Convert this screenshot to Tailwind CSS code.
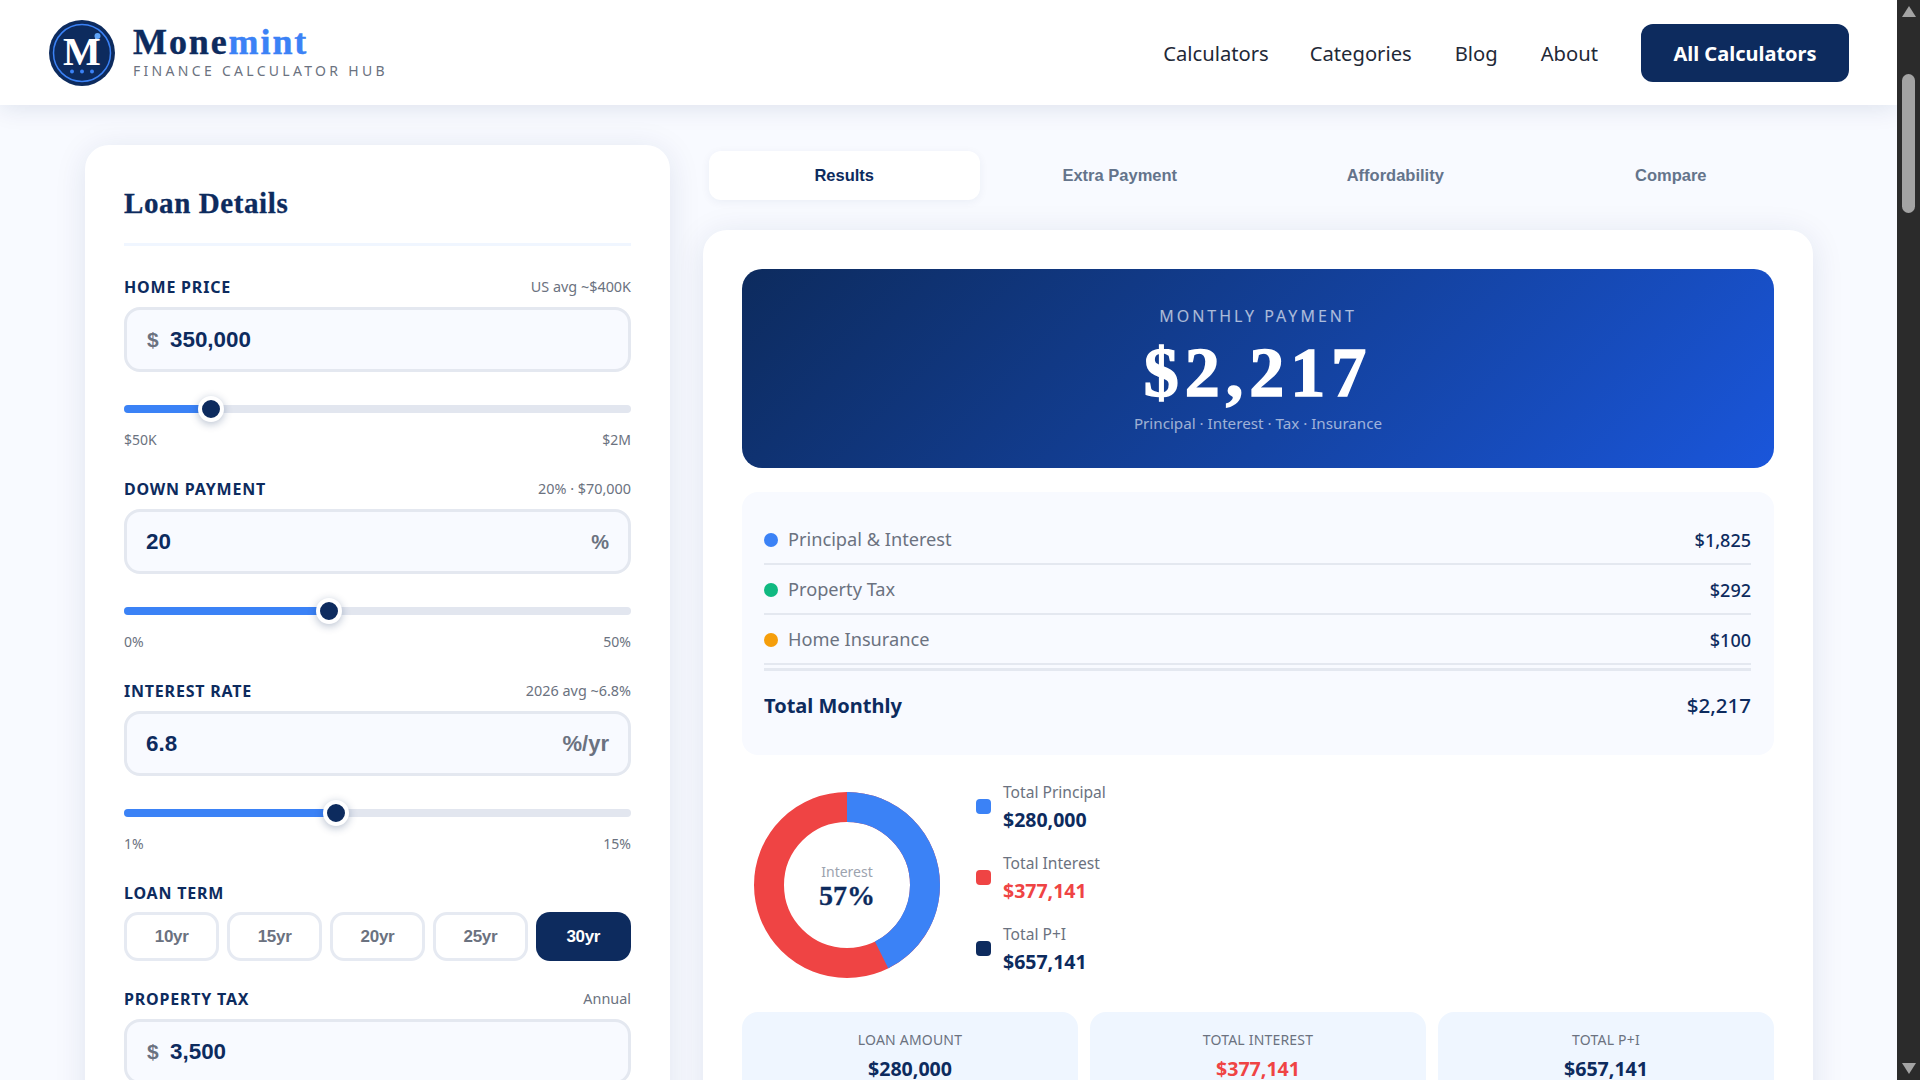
<!DOCTYPE html>
<html lang="en">
<head>
  <meta charset="UTF-8">
  <title>Monemint - Mortgage Calculator</title>
  <meta name="viewport" content="width=device-width, initial-scale=1.0">
  <script src="https://cdn.jsdelivr.net/npm/@tailwindcss/browser@4"></script>
</head>
<body class="h-screen w-screen flex overflow-hidden bg-[#f8faff] font-['Noto_Sans',sans-serif] text-[#0d2b5e]">
  <div class="flex-1 flex flex-col overflow-hidden">
    <!-- Header -->
    <header class="relative z-10 h-[105px] shrink-0 bg-white flex items-center justify-between pl-[49px] pr-[48px] shadow-[0_2px_24px_rgba(13,43,94,0.12)]">
      <div class="flex items-center gap-[18px]">
        <svg width="66" height="66" viewBox="0 0 66 66">
          <circle cx="33" cy="33" r="33" fill="#0d2b5e"/>
          <circle cx="33" cy="33" r="28.5" fill="none" stroke="#3b82f6" stroke-width="1.5"/>
          <text x="33" y="45" text-anchor="middle" font-family="Liberation Serif" font-weight="700" font-size="40" fill="#fff">M</text>
          <polyline points="36,31 40,23 43,26 48,17" fill="none" stroke="#fff" stroke-width="1.5"/>
          <circle cx="48.5" cy="16" r="3" fill="#60a5fa"/>
          <circle cx="23" cy="51.5" r="2" fill="#3b82f6"/>
          <circle cx="33" cy="51.5" r="2" fill="#3b82f6"/>
          <circle cx="43" cy="51.5" r="2" fill="#3b82f6"/>
        </svg>
        <div class="-mt-[2px]">
          <div class="font-['Liberation_Serif',serif] font-bold text-[36px] leading-[36px] tracking-[1.9px] [-webkit-text-stroke:0.4px]">Mone<span class="text-[#3b82f6]">mint</span></div>
          <div class="text-[14px] leading-[18px] mt-[2px] tracking-[3.3px] text-[#6b7280]">FINANCE CALCULATOR HUB</div>
        </div>
      </div>
      <nav class="flex items-center text-[20.2px] text-[#1f2937]">
        <a class="mr-[41px] pt-[2px]">Calculators</a>
        <a class="mr-[43px] pt-[2px]">Categories</a>
        <a class="mr-[43px] pt-[2px]">Blog</a>
        <a class="mr-[43px] pt-[2px]">About</a>
        <a class="w-[208px] h-[58px] pt-[2px] rounded-[12px] bg-[#0d2b5e] text-white text-[20px] font-bold flex items-center justify-center">All Calculators</a>
      </nav>
    </header>

    <!-- Main -->
    <main class="flex-1 flex items-start pl-[85px] pt-[40px] overflow-hidden">
      <!-- Loan details -->
      <section class="w-[585px] shrink-0 bg-white rounded-[24px] px-[39px] pt-[40px] pb-[40px] shadow-[0_4px_32px_rgba(13,43,94,0.1)]">
        <h2 class="font-['Liberation_Serif',serif] font-bold text-[29px] leading-[36px] tracking-[0.6px] [-webkit-text-stroke:0.3px]">Loan Details</h2>
        <div class="mt-[22px] mb-[31px] h-[3px] bg-[#f0f6ff]"></div>

        <div class="flex justify-between items-center h-[20px] mb-[10px]">
          <span class="text-[16px] font-bold tracking-[0.8px]">HOME PRICE</span>
          <span class="mb-[1px] text-[14.4px] text-[#6b7280]">US avg ~$400K</span>
        </div>
        <div class="h-[65px] border-[3px] border-[#e4e8f0] rounded-[16px] bg-[#f8faff] flex items-center pl-[20px] pr-[19px] font-['Liberation_Sans',sans-serif] font-bold">
          <span class="text-[21px] text-[#6b7280] w-[23px]">$</span>
          <span class="text-[22.4px]">350,000</span>
        </div>
        <div class="mt-[24px] h-[26px] flex items-center">
          <div class="relative w-full h-2 rounded-full bg-[#e2e6ef]">
            <div class="h-2 rounded-full bg-[#3b82f6] w-[87px]"></div>
            <div class="absolute left-[74px] top-[-9px] w-[26px] h-[26px] rounded-full bg-[#0d2b5e] border-[4px] border-white shadow-[0_2px_8px_rgba(13,43,94,0.3)]"></div>
          </div>
        </div>
        <div class="mt-[8px] mb-[31px] h-[18px] flex justify-between items-center text-[14px] text-[#6b7280]"><span>$50K</span><span>$2M</span></div>

        <div class="flex justify-between items-center h-[20px] mb-[10px]">
          <span class="text-[16px] font-bold tracking-[0.8px]">DOWN PAYMENT</span>
          <span class="mb-[1px] text-[14.4px] text-[#6b7280]">20% · $70,000</span>
        </div>
        <div class="h-[65px] border-[3px] border-[#e4e8f0] rounded-[16px] bg-[#f8faff] flex items-center justify-between px-[19px] font-['Liberation_Sans',sans-serif] font-bold">
          <span class="text-[22.4px]">20</span>
          <span class="text-[20px] text-[#6b7280]">%</span>
        </div>
        <div class="mt-[24px] h-[26px] flex items-center">
          <div class="relative w-full h-2 rounded-full bg-[#e2e6ef]">
            <div class="h-2 rounded-full bg-[#3b82f6] w-[205px]"></div>
            <div class="absolute left-[192px] top-[-9px] w-[26px] h-[26px] rounded-full bg-[#0d2b5e] border-[4px] border-white shadow-[0_2px_8px_rgba(13,43,94,0.3)]"></div>
          </div>
        </div>
        <div class="mt-[8px] mb-[31px] h-[18px] flex justify-between items-center text-[14px] text-[#6b7280]"><span>0%</span><span>50%</span></div>

        <div class="flex justify-between items-center h-[20px] mb-[10px]">
          <span class="text-[16px] font-bold tracking-[0.8px]">INTEREST RATE</span>
          <span class="mb-[1px] text-[14.4px] text-[#6b7280]">2026 avg ~6.8%</span>
        </div>
        <div class="h-[65px] border-[3px] border-[#e4e8f0] rounded-[16px] bg-[#f8faff] flex items-center justify-between px-[19px] font-['Liberation_Sans',sans-serif] font-bold">
          <span class="text-[22.4px]">6.8</span>
          <span class="text-[22px] text-[#6b7280]">%/yr</span>
        </div>
        <div class="mt-[24px] h-[26px] flex items-center">
          <div class="relative w-full h-2 rounded-full bg-[#e2e6ef]">
            <div class="h-2 rounded-full bg-[#3b82f6] w-[212px]"></div>
            <div class="absolute left-[199px] top-[-9px] w-[26px] h-[26px] rounded-full bg-[#0d2b5e] border-[4px] border-white shadow-[0_2px_8px_rgba(13,43,94,0.3)]"></div>
          </div>
        </div>
        <div class="mt-[8px] mb-[31px] h-[18px] flex justify-between items-center text-[14px] text-[#6b7280]"><span>1%</span><span>15%</span></div>

        <div class="flex items-center h-[20px] mb-[9px]">
          <span class="text-[16px] font-bold tracking-[0.8px]">LOAN TERM</span>
        </div>
        <div class="grid grid-cols-5 gap-[7.5px] font-['Liberation_Sans',sans-serif] font-bold text-[17px] tracking-[-0.3px] text-[#6b7280]">
          <div class="h-[49px] border-[3px] border-[#e6eaf2] rounded-[14px] flex items-center justify-center">10yr</div>
          <div class="h-[49px] border-[3px] border-[#e6eaf2] rounded-[14px] flex items-center justify-center">15yr</div>
          <div class="h-[49px] border-[3px] border-[#e6eaf2] rounded-[14px] flex items-center justify-center">20yr</div>
          <div class="h-[49px] border-[3px] border-[#e6eaf2] rounded-[14px] flex items-center justify-center">25yr</div>
          <div class="h-[49px] rounded-[14px] bg-[#0d2b5e] text-white flex items-center justify-center">30yr</div>
        </div>

        <div class="flex justify-between items-center h-[20px] mt-[28px] mb-[10px]">
          <span class="text-[16px] font-bold tracking-[0.8px]">PROPERTY TAX</span>
          <span class="mb-[1px] text-[14.4px] text-[#6b7280]">Annual</span>
        </div>
        <div class="h-[65px] border-[3px] border-[#e4e8f0] rounded-[16px] bg-[#f8faff] flex items-center pl-[20px] pr-[19px] font-['Liberation_Sans',sans-serif] font-bold">
          <span class="text-[21px] text-[#6b7280] w-[23px]">$</span>
          <span class="text-[22.4px]">3,500</span>
        </div>
      </section>

      <!-- Results -->
      <div class="w-[1110px] shrink-0 ml-[33px]">
        <div class="mt-[6px] ml-[6px] w-[1097px] grid grid-cols-4 gap-[5px] font-['Liberation_Sans',sans-serif] font-bold text-[16.5px] text-[#64748b]">
          <div class="h-[49px] bg-white rounded-[12px] flex items-center justify-center text-[#0d2b5e] shadow-[0_2px_10px_rgba(13,43,94,0.06)]">Results</div>
          <div class="h-[49px] flex items-center justify-center">Extra Payment</div>
          <div class="h-[49px] flex items-center justify-center">Affordability</div>
          <div class="h-[49px] flex items-center justify-center">Compare</div>
        </div>

        <section class="mt-[30px] bg-white rounded-[24px] px-[39px] pt-[39px] pb-[40px] shadow-[0_4px_32px_rgba(13,43,94,0.1)]">
          <!-- Monthly payment -->
          <div class="h-[199px] rounded-[20px] bg-linear-135 from-[#0d2b5e] to-[#1a56db] flex flex-col items-center pt-[37px] text-white">
            <div class="h-[20px] leading-[20px] text-[16px] tracking-[3px] text-white/65">MONTHLY PAYMENT</div>
            <div class="mt-[11px] font-['Liberation_Serif',serif] font-bold text-[70px] leading-[72px] tracking-[6px] [-webkit-text-stroke:1.5px]">$2,217</div>
            <div class="mt-[3px] h-[22px] leading-[22px] text-[15.2px] text-white/60">Principal · Interest · Tax · Insurance</div>
          </div>

          <!-- Breakdown -->
          <div class="mt-[24px] rounded-[16px] bg-[#f8faff] pl-[22px] pr-[23px] pt-[23px] pb-[16px]">
            <div class="h-[50px] pt-[2px] flex items-center justify-between border-b-2 border-[#e4e8f0]">
              <span class="flex items-center text-[18.2px] text-[#6b7280]"><i class="w-[14px] h-[14px] rounded-full bg-[#3b82f6] mr-[10px]"></i>Principal &amp; Interest</span>
              <span class="text-[18px] font-medium">$1,825</span>
            </div>
            <div class="h-[50px] pt-[2px] flex items-center justify-between border-b-2 border-[#e4e8f0]">
              <span class="flex items-center text-[18.2px] text-[#6b7280]"><i class="w-[14px] h-[14px] rounded-full bg-[#10b981] mr-[10px]"></i>Property Tax</span>
              <span class="text-[18px] font-medium">$292</span>
            </div>
            <div class="h-[50px] pt-[2px] flex items-center justify-between border-b-2 border-[#e4e8f0]">
              <span class="flex items-center text-[18.2px] text-[#6b7280]"><i class="w-[14px] h-[14px] rounded-full bg-[#f59e0b] mr-[10px]"></i>Home Insurance</span>
              <span class="text-[18px] font-medium">$100</span>
            </div>
            <div class="mt-[3px] h-[71px] flex items-center justify-between border-t-[3px] border-[#e4e8f0]">
              <span class="pt-[2px] text-[20px] font-bold">Total Monthly</span>
              <span class="text-[20.5px] font-medium">$2,217</span>
            </div>
          </div>

          <!-- Donut and legend -->
          <div class="mt-[37px] ml-[12px] flex items-start">
            <div class="relative w-[186px] h-[186px] shrink-0">
              <svg width="186" height="186" viewBox="0 0 186 186" class="-rotate-90">
                <circle cx="93" cy="93" r="78" fill="none" stroke="#ef4444" stroke-width="30"/>
                <circle cx="93" cy="93" r="78" fill="none" stroke="#3b82f6" stroke-width="30" stroke-dasharray="208.8 281.3"/>
              </svg>
              <div class="absolute inset-0 flex flex-col items-center justify-center pt-[4px]">
                <span class="text-[14px] leading-[18px] text-[#9ca3af]">Interest</span>
                <span class="font-['Liberation_Serif',serif] font-bold text-[28px] leading-[30px] [-webkit-text-stroke:0.3px]">57%</span>
              </div>
            </div>
            <div class="ml-[36px] -mt-[12px] flex flex-col gap-[16px]">
              <div class="h-[55px] flex items-center">
                <i class="w-[15px] h-[15px] -mt-[2px] rounded-[4px] bg-[#3b82f6] mr-[12px]"></i>
                <div><div class="h-[24px] leading-[24px] text-[15.6px] text-[#6b7280]">Total Principal</div><div class="mt-[1px] h-[30px] leading-[30px] text-[19.5px] font-bold">$280,000</div></div>
              </div>
              <div class="h-[55px] flex items-center">
                <i class="w-[15px] h-[15px] -mt-[2px] rounded-[4px] bg-[#ef4444] mr-[12px]"></i>
                <div><div class="h-[24px] leading-[24px] text-[15.6px] text-[#6b7280]">Total Interest</div><div class="mt-[1px] h-[30px] leading-[30px] text-[19.5px] font-bold text-[#ef4444]">$377,141</div></div>
              </div>
              <div class="h-[55px] flex items-center">
                <i class="w-[15px] h-[15px] -mt-[2px] rounded-[4px] bg-[#0d2b5e] mr-[12px]"></i>
                <div><div class="h-[24px] leading-[24px] text-[15.6px] text-[#6b7280]">Total P+I</div><div class="mt-[1px] h-[30px] leading-[30px] text-[19.5px] font-bold">$657,141</div></div>
              </div>
            </div>
          </div>

          <!-- Summary cards -->
          <div class="mt-[34px] grid grid-cols-3 gap-[12px]">
            <div class="rounded-[16px] bg-[#eff6ff] pt-[18px] pb-[18px] text-center">
              <div class="h-[20px] leading-[20px] text-[14px] tracking-[0.2px] text-[#6b7280]">LOAN AMOUNT</div>
              <div class="mt-[9px] h-[20px] leading-[20px] text-[19.6px] font-bold">$280,000</div>
            </div>
            <div class="rounded-[16px] bg-[#eff6ff] pt-[18px] pb-[18px] text-center">
              <div class="h-[20px] leading-[20px] text-[14px] tracking-[0.2px] text-[#6b7280]">TOTAL INTEREST</div>
              <div class="mt-[9px] h-[20px] leading-[20px] text-[19.6px] font-bold text-[#ef4444]">$377,141</div>
            </div>
            <div class="rounded-[16px] bg-[#eff6ff] pt-[18px] pb-[18px] text-center">
              <div class="h-[20px] leading-[20px] text-[14px] tracking-[0.2px] text-[#6b7280]">TOTAL P+I</div>
              <div class="mt-[9px] h-[20px] leading-[20px] text-[19.6px] font-bold">$657,141</div>
            </div>
          </div>
        </section>
      </div>
    </main>
  </div>

  <!-- Scrollbar -->
  <div class="w-[23px] shrink-0 h-full bg-[#2b2b2b] flex flex-col items-center justify-between pt-[6px] pb-[6px] relative">
    <svg width="14" height="11" viewBox="0 0 14 11"><path d="M7 0 14 11H0z" fill="#a3a3a3"/></svg>
    <div class="absolute top-[74px] left-[5px] w-[13px] h-[139px] rounded-full bg-[#a3a3a3]"></div>
    <svg width="14" height="11" viewBox="0 0 14 11"><path d="M7 11 14 0H0z" fill="#a3a3a3"/></svg>
  </div>
</body>
</html>
